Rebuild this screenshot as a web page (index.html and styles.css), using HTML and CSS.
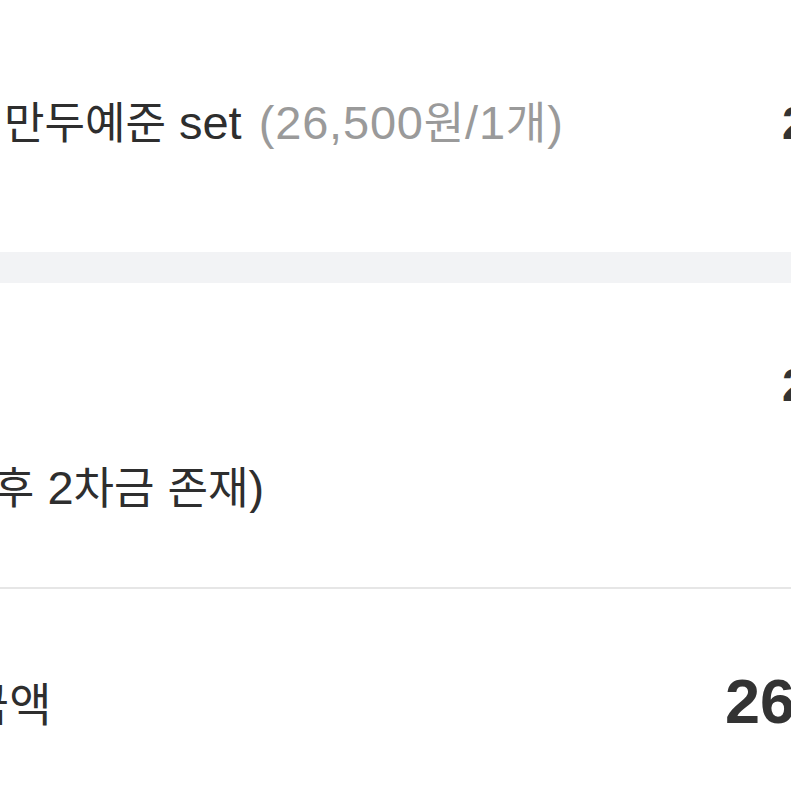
FILE: index.html
```html
<!DOCTYPE html>
<html lang="ko">
<head>
<meta charset="utf-8">
<link rel="stylesheet" href="styles.css">
</head>
<body>
<div class="page">
  <section class="block block-item">
    <div class="row">
      <div class="label"><span class="k">만두예준</span> set <span class="unit">(26,500<span class="k">원</span>/1<span class="k">개</span>)</span></div>
      <div class="price">26,500<span class="k">원</span></div>
    </div>
  </section>
  <div class="band"></div>
  <section class="block block-pay">
    <div class="row row-first">
      <div class="label"></div>
      <div class="price">26,500<span class="k">원</span></div>
    </div>
    <div class="note"><span class="note-text">1<span class="k">차금</span> (<span class="k">입금</span> <span class="k">후</span> 2<span class="k">차금</span> <span class="k">존재</span>)</span></div>
  </section>
  <section class="block block-total">
    <div class="row">
      <div class="label total-label"><span class="total-text">총 결제금액</span></div>
      <div class="price total-price">26,500원</div>
    </div>
  </section>
</div>
</body>
</html>
```

FILE: styles.css
```css
html, body {
  margin: 0;
  padding: 0;
  background: #ffffff;
  overflow: hidden;
}
body {
  width: 791px;
  height: 791px;
  font-family: "Liberation Sans", "Noto Sans CJK KR", sans-serif;
  color: #2e2e2e;
}
.page {
  display: flex;
  flex-direction: column;
  width: 791px;
}
.row {
  display: grid;
  grid-template-columns: 782px auto;
  align-items: center;
  white-space: nowrap;
}
.k {
  font-family: "Noto Sans CJK KR", sans-serif;
  font-size: 44px;
}
.block-item {
  height: 252px;
  display: flex;
  flex-direction: column;
}
.block-item .row {
  padding-top: 95px;
}
.label {
  font-size: 47px;
  padding-left: 4px;
  line-height: 50px;
}
.unit {
  color: #9a9a9a;
  letter-spacing: 0.8px;
  margin-left: 4px;
}
.price {
  font-size: 47px;
  font-weight: 700;
  line-height: 50px;
  color: #333333;
}
.band {
  height: 31px;
  background: #f2f3f5;
}
.block-pay {
  height: 304px;
  border-bottom: 2px solid #e6e6e6;
  display: flex;
  flex-direction: column;
}
.row-first {
  padding-top: 74px;
}
.note {
  font-size: 47px;
  line-height: 50px;
  padding-top: 50px;
  overflow: hidden;
  white-space: nowrap;
}
.note-text {
  display: inline-block;
  margin-left: -236px;
}
.block-total .row {
  padding-top: 82px;
}
.total-label {
  overflow: hidden;
  padding-left: 0;
  font-family: "Noto Sans CJK KR", sans-serif;
  font-size: 46px;
  line-height: 60px;
}
.total-text {
  display: inline-block;
  margin-left: -173px;
}
.total-price {
  font-size: 63px;
  margin-left: -57px;
  line-height: 60px;
}
```
